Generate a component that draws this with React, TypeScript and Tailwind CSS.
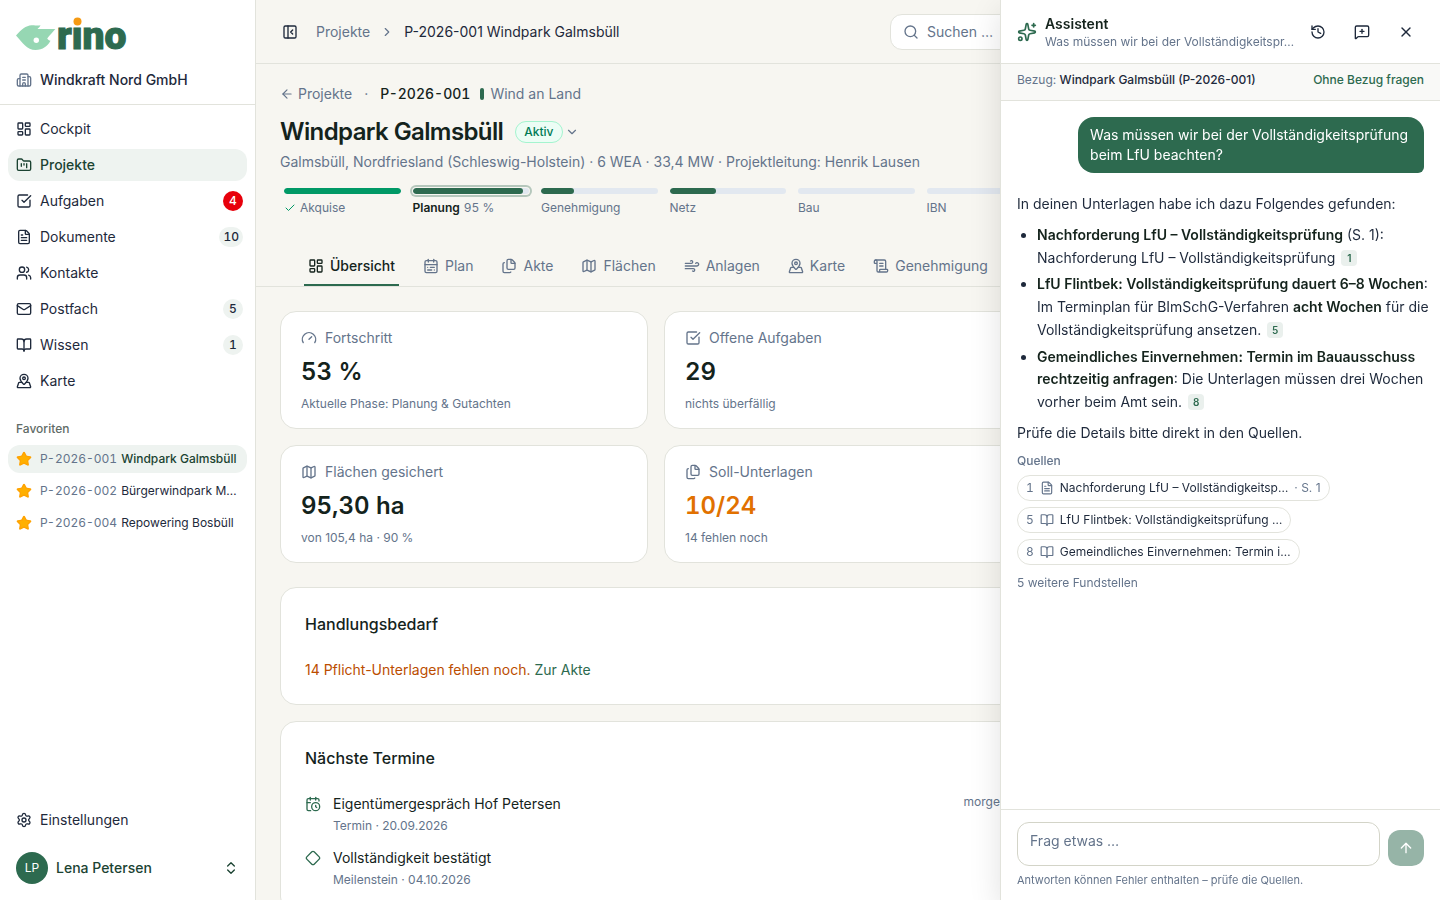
import {
  ArrowLeft,
  ArrowUp,
  BookOpen,
  Building2,
  CalendarClock,
  CalendarRange,
  Check,
  ChevronDown,
  ChevronRight,
  ChevronsUpDown,
  Diamond,
  FileText,
  Files,
  FolderKanban,
  Gauge,
  History,
  LayoutDashboard,
  Mail,
  Map,
  MapPinned,
  MessageSquarePlus,
  PanelLeftClose,
  ScrollText,
  Search,
  Settings,
  Sparkles,
  SquareCheckBig,
  Star,
  Users,
  Wind,
  X,
  type LucideIcon,
} from "lucide-react";
import clsx from "clsx";
import type { ReactNode } from "react";

type NavEntry = { label: string; icon: LucideIcon; count?: number; urgent?: boolean; active?: boolean };

const nav: NavEntry[] = [
  { label: "Cockpit", icon: LayoutDashboard },
  { label: "Projekte", icon: FolderKanban, active: true },
  { label: "Aufgaben", icon: SquareCheckBig, count: 4, urgent: true },
  { label: "Dokumente", icon: FileText, count: 10 },
  { label: "Kontakte", icon: Users },
  { label: "Postfach", icon: Mail, count: 5 },
  { label: "Wissen", icon: BookOpen, count: 1 },
  { label: "Karte", icon: MapPinned },
];

const favorites = [
  { id: "P-2026-001", name: "Windpark Galmsbüll", active: true },
  { id: "P-2026-002", name: "Bürgerwindpark M…" },
  { id: "P-2026-004", name: "Repowering Bosbüll" },
];

const phases = [
  { name: "Akquise", value: 100, done: true },
  { name: "Planung", value: 95, current: true },
  { name: "Genehmigung", value: 28 },
  { name: "Netz", value: 40 },
  { name: "Bau", value: 0 },
  { name: "IBN", value: 0 },
];

const tabs = [
  { label: "Übersicht", icon: LayoutDashboard, active: true },
  { label: "Plan", icon: CalendarRange },
  { label: "Akte", icon: Files },
  { label: "Flächen", icon: Map },
  { label: "Anlagen", icon: Wind },
  { label: "Karte", icon: MapPinned },
  { label: "Genehmigung", icon: ScrollText },
];

const stats = [
  [
    { label: "Fortschritt", icon: Gauge, value: "53 %", note: "Aktuelle Phase: Planung & Gutachten" },
    { label: "Offene Aufgaben", icon: SquareCheckBig, value: "29", note: "nichts überfällig" },
  ],
  [
    { label: "Flächen gesichert", icon: Map, value: "95,30 ha", note: "von 105,4 ha · 90 %" },
    { label: "Soll-Unterlagen", icon: Files, value: "10/24", note: "14 fehlen noch", warn: true },
  ],
];

const sources = [
  { nr: 1, icon: FileText, title: "Nachforderung LfU – Vollständigkeitsp…", page: "· S. 1" },
  { nr: 5, icon: BookOpen, title: "LfU Flintbek: Vollständigkeitsprüfung …" },
  { nr: 8, icon: BookOpen, title: "Gemeindliches Einvernehmen: Termin i…" },
];

function Logo() {
  return (
    <svg viewBox="0 -6 116 50" className="h-[50px] w-[116px]" role="img" aria-label="rino">
      <path
        d="M0 19.500C5 13.500 10 9.600 15.500 9.200C19 9 21 10 24.500 9.300C24 10.800 22.800 11.800 21.500 12.900H39.300C37 16 33.500 19 31.200 22.500C32 23.800 33 24.500 34.500 24.800C31.500 30 27 34 19.500 34C11 34 6 26 0 19.500Z"
        fill="#96d7b3"
      />
      <circle cx="20.300" cy="24.300" r="2.700" fill="#fff" />
      <text
        x="41"
        y="33"
        fill="#2d6a4f"
        stroke="#2d6a4f"
        strokeWidth="1"
        fontSize="39"
        fontWeight="900"
        fontFamily="Roboto, sans-serif"
      >
        rino
      </text>
      {/* orange dot replaces the regular one of the i */}
      <rect x="54.500" y="0" width="14" height="11" fill="#fff" />
      <circle cx="61.500" cy="5.500" r="4" fill="#f59a14" />
    </svg>
  );
}

function Sidebar() {
  return (
    <aside className="flex w-64 shrink-0 flex-col border-r border-[#e2e3dc] bg-white">
      <div className="flex flex-col gap-2.5 border-b border-[#e2e3dc] px-4 pt-2.5 pb-3.5">
        <Logo />
        <div className="flex items-center gap-2 font-medium">
          <Building2 className="size-4 text-[#64748b]" />
          Windkraft Nord GmbH
        </div>
      </div>

      <nav className="flex flex-col gap-1 p-2">
        {nav.map(({ label, icon: Icon, count, urgent, active }) => (
          <a
            key={label}
            href="#"
            className={clsx("flex h-8 items-center gap-2 rounded-xl pr-1 pl-2", active && "bg-[#eef3f0] font-medium text-[#1b4332]")}
          >
            <Icon className="size-4" />
            <span className="flex-1">{label}</span>
            {count && (
              <span
                className={clsx(
                  "flex h-5 min-w-5 items-center justify-center rounded-full px-1 text-xs font-medium tabular-nums",
                  urgent ? "bg-[#e7000b] text-white" : "bg-[#eef3f0]"
                )}
              >
                {count}
              </span>
            )}
          </a>
        ))}
      </nav>

      <div className="mt-2 px-2">
        <h2 className="flex h-8 items-center px-2 text-xs font-medium text-[#5f6b66]">Favoriten</h2>
        <ul className="flex flex-col gap-1">
          {favorites.map((fav) => (
            <li key={fav.id}>
              <a
                href="#"
                className={clsx(
                  "flex h-7 items-center gap-2 rounded-xl px-2 text-xs whitespace-nowrap",
                  fav.active && "bg-[#eef3f0] font-medium text-[#1b4332]"
                )}
              >
                <Star className="size-4 shrink-0 fill-[#ffb000] text-[#ffa200]" />
                <span className="flex gap-1">
                  <span className="font-normal text-[#64748b] tabular-nums">{fav.id}</span>
                  {fav.name}
                </span>
              </a>
            </li>
          ))}
        </ul>
      </div>

      <div className="mt-auto flex flex-col gap-2 p-2">
        <a href="#" className="flex h-8 items-center gap-2 rounded-xl px-2">
          <Settings className="size-4" />
          Einstellungen
        </a>
        <button className="flex h-12 items-center gap-2 rounded-xl px-2 text-left font-medium text-[#1b4332]">
          <span className="flex size-8 items-center justify-center rounded-full bg-[#2d6a4f] text-xs font-normal text-white">LP</span>
          <span className="flex-1">Lena Petersen</span>
          <ChevronsUpDown className="size-4" />
        </button>
      </div>
    </aside>
  );
}

function Topbar() {
  return (
    <header className="flex h-16 shrink-0 items-center gap-2 border-b border-[#e2e3dc] pr-[294px] pl-6">
      <button aria-label="Seitenleiste einklappen" className="flex h-7 w-5 items-center justify-center">
        <PanelLeftClose className="size-4" />
      </button>
      <nav className="ml-2 flex items-center gap-2.5">
        <a href="#" className="text-[#64748b]">
          Projekte
        </a>
        <ChevronRight className="size-3.5 text-[#64748b]" />
        <span>P-2026-001 Windpark Galmsbüll</span>
      </nav>
      <button className="ml-auto flex h-9 w-64 items-center gap-2 rounded-xl border border-[#e2e3dc] bg-white px-3 text-[#64748b]">
        <Search className="size-4" />
        Suchen …
      </button>
    </header>
  );
}

function ProjectHead() {
  return (
    <div className="px-6 pt-5">
      <div className="flex items-center gap-2 text-[#64748b]">
        <a href="#" className="flex items-center gap-1">
          <ArrowLeft className="size-3.5" />
          Projekte
        </a>
        <span className="px-1">·</span>
        <span className="font-medium text-[#14231c] tabular-nums">P-2026-001</span>
        <span className="flex items-center gap-1.5">
          <span className="ml-0.5 h-3 w-1 rounded-xs bg-[#2d6a4f]" />
          Wind an Land
        </span>
      </div>
      <div className="mt-3 flex items-center gap-3">
        <h1 className="text-2xl font-semibold tracking-tight text-[#14231c]">Windpark Galmsbüll</h1>
        <button className="flex items-center gap-0.5 text-[#64748b]">
          <span className="rounded-full border border-[#a4f4cf] bg-[#ecfdf5] px-2 py-0.5 text-xs font-medium text-[#007a55]">Aktiv</span>
          <ChevronDown className="size-3.5" />
        </button>
      </div>
      <p className="mt-1 text-[#64748b]">
        Galmsbüll, Nordfriesland (Schleswig-Holstein) · 6 WEA · 33,4 MW · Projektleitung: Henrik Lausen
      </p>

      <ol className="mt-4 grid max-w-5xl grid-cols-8 gap-1">
        {phases.map((phase) => (
          <li key={phase.name} className="px-1 text-xs text-[#64748b]">
            <div
              className={clsx(
                "h-1.5 overflow-hidden rounded-full bg-[#e2e8f0]",
                phase.current && "ring-2 ring-[#b5c7bc] ring-offset-1 ring-offset-[#f7f6f1]"
              )}
            >
              <div
                className={clsx("h-full rounded-full", phase.done ? "bg-[#009966]" : "bg-[#2d6a4f]")}
                style={{ width: `${phase.value}%` }}
              />
            </div>
            <div className="mt-1.5 flex items-center gap-1">
              {phase.done && <Check className="size-3 text-[#009966]" />}
              <span className={clsx(phase.current && "font-semibold text-[#14231c]")}>{phase.name}</span>
              {phase.current && <span className="tabular-nums">{phase.value} %</span>}
            </div>
          </li>
        ))}
      </ol>
    </div>
  );
}

function Tabs() {
  return (
    <div role="tablist" className="mt-7 flex gap-5 border-b border-[#e2e3dc] px-12">
      {tabs.map(({ label, icon: Icon, active }) => (
        <button
          key={label}
          role="tab"
          aria-selected={!!active}
          className={clsx(
            "flex h-[42px] shrink-0 items-center gap-1.5 border-b-2 px-1 pt-1",
            active ? "border-[#2d6a4f] font-medium text-[#14231c]" : "border-transparent text-[#64748b]"
          )}
        >
          <Icon className="size-4" />
          {label}
        </button>
      ))}
    </div>
  );
}

function Panel({ title, children }: { title: string; children: ReactNode }) {
  return (
    <section className="col-span-2 rounded-2xl border border-[#e2e3dc] bg-white p-6">
      <h2 className="text-base font-medium text-[#14231c]">{title}</h2>
      {children}
    </section>
  );
}

function Overview() {
  return (
    <div className="px-6 pt-6">
      <div className="flex flex-col gap-4">
        {stats.map((row, i) => (
          <div key={i} className="grid grid-cols-3 gap-4">
            {row.map(({ label, icon: Icon, value, note, warn }: any) => (
              <div key={label} className="rounded-2xl border border-[#e2e3dc] bg-white px-5 py-4">
                <div className="flex items-center gap-2 text-[#64748b]">
                  <Icon className="size-4" />
                  {label}
                </div>
                <div className={clsx("mt-2 text-2xl font-semibold tabular-nums", warn ? "text-[#e17100]" : "text-[#14231c]")}>
                  {value}
                </div>
                <div className="mt-2 text-xs text-[#64748b]">{note}</div>
              </div>
            ))}
          </div>
        ))}
      </div>

      <div className="mt-6 grid grid-cols-3 gap-4">
        <Panel title="Handlungsbedarf">
          <p className="mt-6 text-[#bb4d00]">
            14 Pflicht-Unterlagen fehlen noch.{" "}
            <a href="#" className="text-[#2d6a4f]">
              Zur Akte
            </a>
          </p>
        </Panel>
        <Panel title="Nächste Termine">
          <ul className="mt-6 flex flex-col gap-3.5 text-[#14231c]">
            <li className="flex gap-3">
              <CalendarClock className="mt-0.5 size-4 text-[#2d6a4f]" />
              <div className="flex-1">
                Eigentümergespräch Hof Petersen
                <div className="mt-1 text-xs text-[#64748b]">Termin · 20.09.2026</div>
              </div>
              <span className="text-xs text-[#64748b]">morgen</span>
            </li>
            <li className="flex gap-3">
              <Diamond className="mt-0.5 size-4 text-[#2d6a4f]" />
              <div className="flex-1">
                Vollständigkeit bestätigt
                <div className="mt-1 text-xs text-[#64748b]">Meilenstein · 04.10.2026</div>
              </div>
            </li>
          </ul>
        </Panel>
      </div>
    </div>
  );
}

function Cite({ nr }: { nr: number }) {
  return (
    <button className="ml-0.5 inline-flex size-4 items-center justify-center rounded-sm bg-[#eaf0ed] align-text-bottom text-[10px] leading-4 font-semibold text-[#2d6a4f]">
      {nr}
    </button>
  );
}

function Strong({ children }: { children: ReactNode }) {
  return <strong className="font-semibold text-[#14231c]">{children}</strong>;
}

function Assistant() {
  return (
    <aside className="fixed inset-y-0 right-0 flex w-[440px] flex-col border-l border-[#e2e3dc] bg-white shadow-[0_10px_30px_rgba(0,0,0,0.12)]">
      <header className="flex h-16 shrink-0 items-center gap-2 border-b border-[#e2e3dc] px-4">
        <Sparkles className="size-5 shrink-0 text-[#2d6a4f]" />
        <div className="min-w-0 flex-1">
          <h2 className="font-semibold text-[#14231c]">Assistent</h2>
          <p className="text-xs whitespace-nowrap text-[#64748b]">Was müssen wir bei der Vollständigkeitspr…</p>
        </div>
        <div className="flex gap-2">
          <button aria-label="Verlauf" className="flex size-9 items-center justify-center">
            <History className="size-4" />
          </button>
          <button aria-label="Neue Unterhaltung" className="flex size-9 items-center justify-center">
            <MessageSquarePlus className="size-4" />
          </button>
          <button aria-label="Schließen" className="flex size-9 items-center justify-center">
            <X className="size-4" />
          </button>
        </div>
      </header>
      <div className="flex items-start justify-between border-b border-[#e2e3dc] bg-[#f9f9f7] px-4 pt-2 pb-3 text-xs">
        <span className="text-[#64748b]">
          Bezug: <span className="font-medium text-[#1e293b]">Windpark Galmsbüll (P-2026-001)</span>
        </span>
        <button className="font-medium text-[#2d6a4f]">Ohne Bezug fragen</button>
      </div>

      <div className="flex flex-1 flex-col gap-5 overflow-y-auto p-4">
        <p className="max-w-[85%] self-end rounded-2xl rounded-br-md bg-[#2d6a4f] px-3 py-2 text-white">
          Was müssen wir bei der Vollständigkeitsprüfung beim LfU beachten?
        </p>
        <div className="flex flex-col gap-2">
          <p className="leading-relaxed">In deinen Unterlagen habe ich dazu Folgendes gefunden:</p>
          <ul className="-mr-3 flex list-disc flex-col gap-1 pl-5 leading-relaxed">
            <li>
              <Strong>Nachforderung LfU – Vollständigkeitsprüfung</Strong> (S. 1): Nachforderung LfU – Vollständigkeitsprüfung <Cite nr={1} />
            </li>
            <li>
              <Strong>LfU Flintbek: Vollständigkeitsprüfung dauert 6–8 Wochen</Strong>: Im Terminplan für BImSchG-Verfahren{" "}
              <Strong>acht Wochen</Strong> für die Vollständigkeitsprüfung ansetzen. <Cite nr={5} />
            </li>
            <li>
              <Strong>Gemeindliches Einvernehmen: Termin im Bauausschuss rechtzeitig anfragen</Strong>: Die Unterlagen müssen drei
              Wochen vorher beim Amt sein. <Cite nr={8} />
            </li>
          </ul>
          <p className="leading-relaxed">Prüfe die Details bitte direkt in den Quellen.</p>
          <div className="text-xs text-[#64748b]">
            <h3 className="font-medium">Quellen</h3>
            <ul className="mt-1.5 flex flex-col items-start gap-1.5">
              {sources.map(({ nr, icon: Icon, title, page }) => (
                <li key={nr}>
                  <a href="#" className="flex h-[26px] items-center gap-1.5 rounded-full border border-[#e2e3dc] px-2 whitespace-nowrap">
                    <span className="tabular-nums">{nr}</span>
                    <Icon className="size-3.5" />
                    <span className="text-[#1e293b]">{title}</span>
                    {page && <span>{page}</span>}
                  </a>
                </li>
              ))}
            </ul>
            <button className="mt-2.5">5 weitere Fundstellen</button>
          </div>
        </div>
      </div>

      <form className="border-t border-[#e2e3dc] px-4 py-3">
        <div className="flex items-end gap-2">
          <textarea
            rows={1}
            aria-label="Frage"
            placeholder="Frag etwas …"
            className="h-11 flex-1 resize-none rounded-xl border border-[#d3d4c8] px-3 py-2 placeholder:text-[#64748b]"
          />
          <button type="button" aria-label="Senden" className="flex size-9 items-center justify-center rounded-xl bg-[#96b4a7] text-white">
            <ArrowUp className="size-4" />
          </button>
        </div>
        <p className="mt-1.5 text-[11px] leading-4 text-[#64748b]">Antworten können Fehler enthalten – prüfe die Quellen.</p>
      </form>
    </aside>
  );
}

export default function App() {
  return (
    <div className="flex h-screen overflow-hidden bg-[#f7f6f1] font-[Inter,sans-serif] text-sm text-[#1e293b]">
      <Sidebar />
      <main className="flex min-w-0 flex-1 flex-col overflow-hidden">
        <Topbar />
        <div className="min-h-0 flex-1 overflow-hidden">
          <ProjectHead />
          <Tabs />
          <Overview />
        </div>
      </main>
      <Assistant />
    </div>
  );
}
